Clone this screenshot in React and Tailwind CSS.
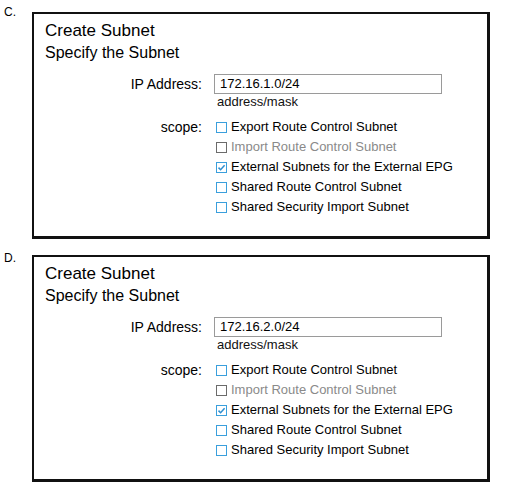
import React from "react";

function Box({ state }) {
  if (state === "disabled") {
    return <span className="block w-[11px] h-[11px] border border-[#6b6b6b] bg-white shrink-0" />;
  }
  return (
    <span className="relative block w-[11px] h-[11px] border border-[#3a9fdc] bg-white shrink-0">
      {state === "checked" && (
        <svg className="absolute left-0 top-0" width="9" height="9" viewBox="0 0 9 9">
          <path d="M1.5 4.6 L3.6 6.7 L7.6 2.2" fill="none" stroke="#2f8fd0" strokeWidth="1.5" />
        </svg>
      )}
    </span>
  );
}

function Panel({ ip }) {
  const rows = [
    ["Export Route Control Subnet", "normal"],
    ["Import Route Control Subnet", "disabled"],
    ["External Subnets for the External EPG", "checked"],
    ["Shared Route Control Subnet", "normal"],
    ["Shared Security Import Subnet", "normal"],
  ];
  return (
    <div className="w-[458px] h-[227px] border-l-2 border-t-2 border-r-[3px] border-b-[3px] border-[#111] bg-white pl-[11px] pt-[7px]">
      <div className="text-[17px] leading-[20px] text-black">Create Subnet</div>
      <div className="text-[16px] leading-[20px] text-black mt-[2px]">Specify the Subnet</div>
      <div className="flex mt-[11px] -ml-[11px]">
        <div className="w-[168px] text-right text-[14px] leading-[20px] text-black">IP Address:</div>
        <div className="ml-[12px] flex flex-col">
          <div className="w-[228px] h-[20px] border border-[#9a9a9a] text-[13px] leading-[18px] pl-[5px] text-black">
            {ip}
          </div>
          <div className="text-[13px] leading-[15px] text-[#111] pl-[3px]">address/mask</div>
        </div>
      </div>
      <div className="flex mt-[8px] -ml-[11px]">
        <div className="w-[168px] text-right text-[14px] leading-[20px] text-black">scope:</div>
        <div className="ml-[14px] flex flex-col">
          {rows.map(([t, s]) => (
            <div key={t} className="flex items-center h-[20px]">
              <Box state={s} />
              <span
                className={
                  "ml-[4px] text-[13px] leading-[20px] " +
                  (s === "disabled" ? "text-[#8a8a8a]" : "text-black")
                }
              >
                {t}
              </span>
            </div>
          ))}
        </div>
      </div>
    </div>
  );
}

export default function App() {
  return (
    <div
      className="w-[507px] h-[490px] bg-white overflow-hidden"
      style={{ fontFamily: '"Liberation Sans", Arial, sans-serif' }}
    >
      <div className="flex items-start pt-[5px]">
        <div className="w-[32px] pl-[4px] text-[12px] leading-[14px] text-black">C.</div>
        <div className="mt-[7px]">
          <Panel ip="172.16.1.0/24" />
        </div>
      </div>
      <div className="flex items-start mt-[12px]">
        <div className="w-[32px] pl-[4px] text-[12px] leading-[14px] text-black">D.</div>
        <div className="mt-[4px]">
          <Panel ip="172.16.2.0/24" />
        </div>
      </div>
    </div>
  );
}
